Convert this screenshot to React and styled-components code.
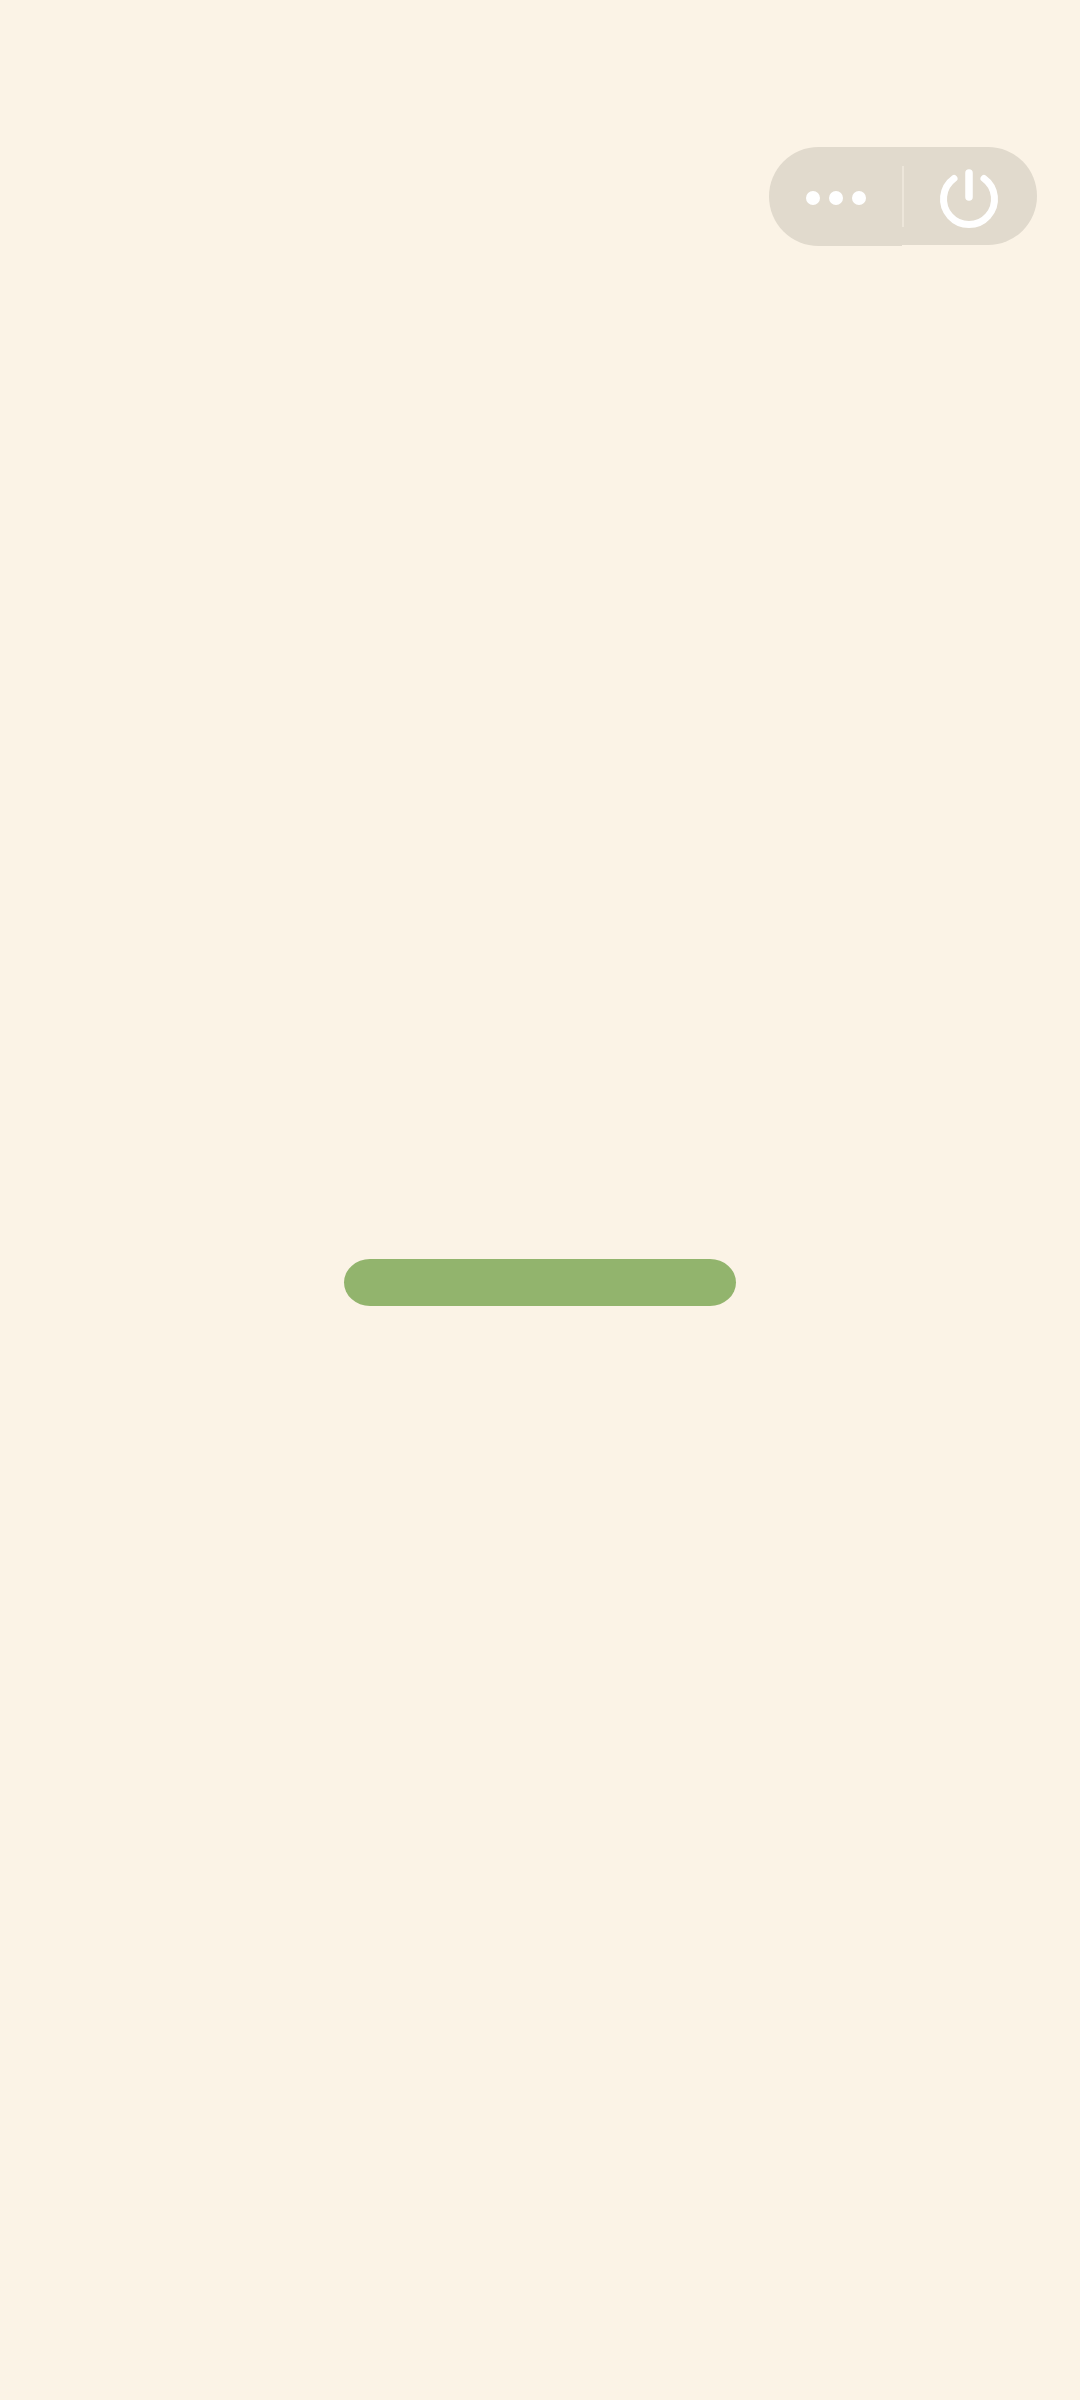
import React from "react";
import styled, { createGlobalStyle } from "styled-components";

const Global = createGlobalStyle`
  html, body { margin: 0; padding: 0; background: #fbf3e6; }
`;

const Page = styled.div`
  width: 1080px;
  height: 2400px;
  background: #fbf3e6;
  display: flex;
  flex-direction: column;
  padding-top: 147px;
  box-sizing: border-box;
  overflow: hidden;
`;

const Capsule = styled.div`
  align-self: flex-end;
  margin-right: 43px;
  width: 268px;
  height: 98px;
  display: flex;
  align-items: flex-start;
`;

const Segment = styled.button`
  border: 0;
  padding: 0;
  margin: 0;
  background: #e1dacd;
  display: flex;
  align-items: center;
  justify-content: center;
  flex: none;
  width: ${(p) => p.$w}px;
  height: ${(p) => p.$h}px;
  border-radius: ${(p) => p.$radius};
`;

const Divider = styled.div`
  flex: none;
  width: 2px;
  height: 98px;
  background: #e1dacd;
  display: flex;
  align-items: center;
`;

const DividerLine = styled.div`
  width: 2px;
  height: 61px;
  background: #ede6da;
`;

const Dots = styled.div`
  display: flex;
  gap: 9px;
  margin-top: 3px;
`;

const Dot = styled.span`
  width: 14px;
  height: 14px;
  border-radius: 50%;
  background: #fff;
`;

const PowerIcon = styled.svg`
  width: 64px;
  height: 64px;
  margin: 6px 3px 0 0;
  display: block;
`;

const Bar = styled.div`
  align-self: flex-start;
  margin: 1014px 0 0 344px;
  width: 392px;
  height: 47px;
  background: #92b46d;
  border-radius: 26px / 23.5px;
`;

export default function App() {
  return (
    <>
      <Global />
      <Page>
        <Capsule>
          <Segment $w={133} $h={99} $radius="49.5px 0 0 49.5px" aria-label="more">
            <Dots>
              <Dot />
              <Dot />
              <Dot />
            </Dots>
          </Segment>
          <Divider>
            <DividerLine />
          </Divider>
          <Segment $w={133} $h={98} $radius="0 49px 49px 0" aria-label="power">
            <PowerIcon viewBox="0 0 64 64" fill="none" stroke="#fff" strokeLinecap="round">
              <path d="M32 6 V30" strokeWidth="7.5" />
              <path d="M17 11.5 A25.5 25.5 0 1 0 47 11.5" strokeWidth="7" />
            </PowerIcon>
          </Segment>
        </Capsule>
        <Bar />
      </Page>
    </>
  );
}
